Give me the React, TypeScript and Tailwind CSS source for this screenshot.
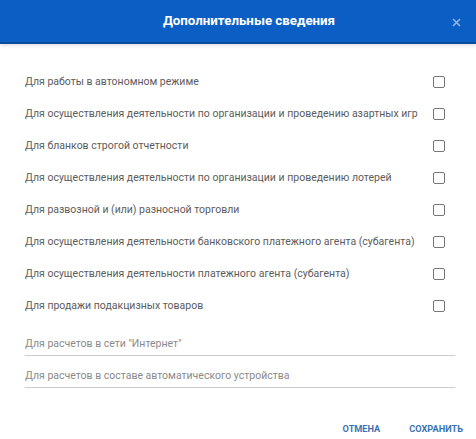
import React from "react";

const rows = [
  "Для работы в автономном режиме",
  "Для осуществления деятельности по организации и проведению азартных игр",
  "Для бланков строгой отчетности",
  "Для осуществления деятельности по организации и проведению лотерей",
  "Для развозной и (или) разносной торговли",
  "Для осуществления деятельности банковского платежного агента (субагента)",
  "Для осуществления деятельности платежного агента (субагента)",
  "Для продажи подакцизных товаров",
];

export default function App() {
  return (
    <div className="w-[476px] h-[439px] bg-white overflow-hidden" style={{ fontFamily: "Roboto, 'Noto Sans', sans-serif" }}>
      <div className="relative h-[44px] bg-[#0b5ec3] border-b-2 border-[#0a4c9c] flex items-center justify-center pl-[22px] shadow-[0_2px_4px_rgba(0,0,0,0.12)]">
        <span className="text-white font-bold text-[13.3px]">Дополнительные сведения</span>
        <svg className="absolute right-[15px] top-[18px]" width="9" height="9" viewBox="0 0 9 9">
          <path d="M1 1L8 8M8 1L1 8" stroke="#8fb8ea" strokeWidth="1.6" />
        </svg>
      </div>
      <div className="pl-[25px] pr-[21px] pt-[22px]">
        {rows.map((r) => (
          <div key={r} className="h-[32px] flex items-center justify-between">
            <span className="text-[10.5px] text-[#5c5c5c] whitespace-nowrap">{r}</span>
            <span className="shrink-0 w-[12px] h-[12px] border-[1.5px] border-[#777] rounded-[2px] mr-[10px]" />
          </div>
        ))}
        <div className="mt-[10px] h-[24px] border-b border-[#ccc] flex items-center">
          <span className="text-[10.5px] text-[#8a8a8a]">Для расчетов в сети "Интернет"</span>
        </div>
        <div className="mt-[8px] h-[24px] border-b border-[#ccc] flex items-center">
          <span className="text-[10.5px] text-[#8a8a8a]">Для расчетов в составе автоматического устройства</span>
        </div>
        <div className="mt-[34px] flex justify-end gap-[29px]">
          <span className="text-[9.2px] font-bold text-[#3b73b2]">ОТМЕНА</span>
          <span className="text-[9.2px] font-bold text-[#3b73b2] mr-[-8px]">СОХРАНИТЬ</span>
        </div>
      </div>
    </div>
  );
}
